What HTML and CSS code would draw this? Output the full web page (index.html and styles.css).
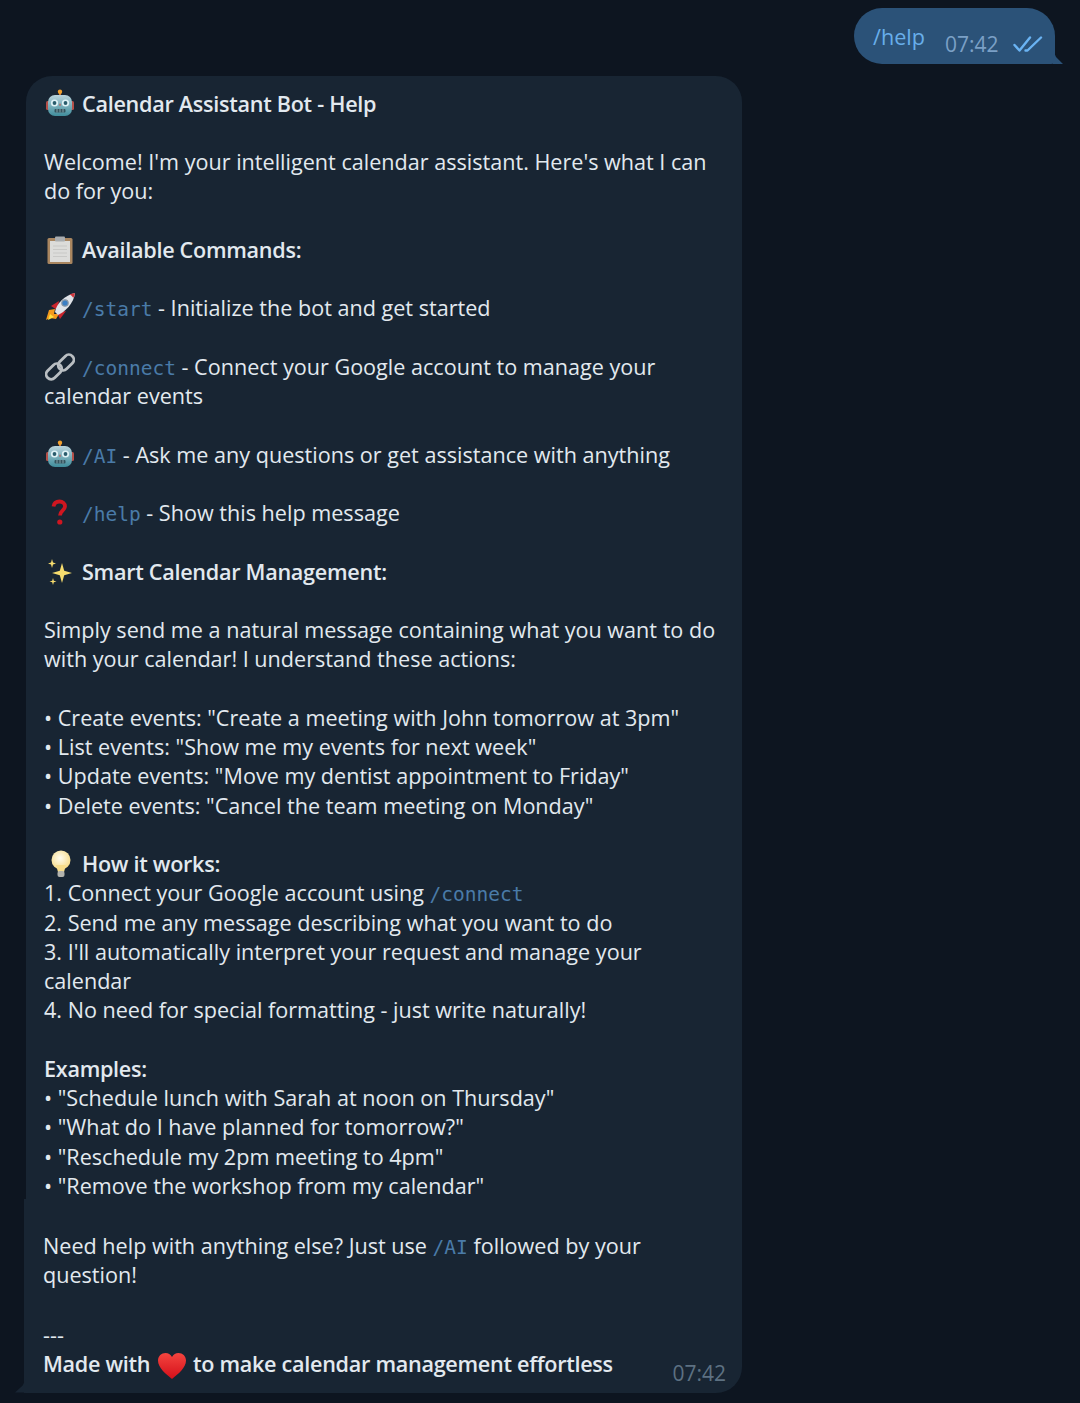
FILE: index.html
```html
<!DOCTYPE html>
<html lang="en">
<head>
  <meta charset="UTF-8">
  <meta name="viewport" content="width=device-width, initial-scale=1.0">
  <title>Calendar Assistant Bot</title>
  <link rel="stylesheet" href="styles.css">
</head>

<body>
  <!-- shared icons -->
  <svg class="defs" width="0" height="0">
    <defs>
      <linearGradient id="robotFace" x1="0" y1="0" x2="0" y2="1">
        <stop offset="0" stop-color="#b9d3dc"/>
        <stop offset="1" stop-color="#3f8d9c"/>
      </linearGradient>
      <radialGradient id="bulbGlow" cx="0.45" cy="0.4" r="0.6">
        <stop offset="0" stop-color="#fffdf0"/>
        <stop offset="1" stop-color="#f7dc8a"/>
      </radialGradient>
      <linearGradient id="heartFill" x1="0" y1="0" x2="0" y2="1">
        <stop offset="0" stop-color="#f4453f"/>
        <stop offset="1" stop-color="#d40f1a"/>
      </linearGradient>
      <symbol id="robot" viewBox="0 0 30 30">
        <rect x="14" y="1" width="2" height="5" fill="#c9763a"/>
        <circle cx="15" cy="2.800" r="2.200" fill="#f0a030"/>
        <rect x="1" y="12" width="4" height="9" rx="1.500" fill="#b5504a"/>
        <rect x="25" y="12" width="4" height="9" rx="1.500" fill="#b5504a"/>
        <rect x="3" y="6" width="24" height="21" rx="7" fill="url(#robotFace)"/>
        <circle cx="9.500" cy="14" r="3.600" fill="#dff2f6"/>
        <circle cx="20.500" cy="14" r="3.600" fill="#dff2f6"/>
        <circle cx="9.500" cy="14" r="1.900" fill="#2a5c6c"/>
        <circle cx="20.500" cy="14" r="1.900" fill="#2a5c6c"/>
        <path d="M14 16.500h2l-1-2.500z" fill="#c2574f"/>
        <rect x="9.500" y="20" width="11" height="3.400" rx="1" fill="#34545e"/>
        <path d="M12 20v3.400M15 20v3.400M18 20v3.400" stroke="#a9c5cc" stroke-width=".7"/>
      </symbol>
    </defs>
  </svg>

  <main class="chat">
    <div class="row-out">
      <div class="bubble-out">
        <span class="out-text">/help</span>
        <span class="out-time">07:42</span>
        <svg class="ticks" width="30" height="18" viewBox="0 0 30 18">
          <path d="M1.500 10l5 5.500L17 2.500M12.500 15.500l2 0L28 2.500" fill="none" stroke="#6ab3f3" stroke-width="2.400" stroke-linecap="round" stroke-linejoin="round"/>
        </svg>
      </div>
    </div>

    <div class="bubble-in">
      <div class="bubble-main">
        <p class="bold"><span class="emoji"><svg class="icon"><use href="#robot"/></svg></span>Calendar Assistant Bot - Help</p>

        <p>Welcome! I'm your intelligent calendar assistant. Here's what I can do for you:</p>

        <p class="bold"><span class="emoji">
          <svg class="icon" viewBox="0 0 30 30">
            <rect x="2.500" y="3" width="25" height="26" rx="1.500" fill="#a98660"/>
            <rect x="5" y="6" width="20" height="21" fill="#dcdcda"/>
            <path d="M8 11h14M8 14.500h14M8 18h14M8 21.500h14" stroke="#c8c8c6" stroke-width="1.200"/>
            <rect x="10" y="1.500" width="10" height="5" rx="1" fill="#a9adb0"/>
          </svg>
        </span>Available Commands:</p>

        <p><span class="emoji">
          <svg class="icon" viewBox="0 0 30 30">
            <path d="M1 27l3-10 6-1-1 5 5 0-3 5-6-1z" fill="#f59a1c"/>
            <path d="M3 27l2-6 4 3z" fill="#ffdf3c"/>
            <path d="M6 13l8-5-2 9z" fill="#c9252d"/>
            <path d="M15 26l6-8-9 2z" fill="#c9252d"/>
            <path d="M10 19C11 11 20 2 30 0c-1 10-10 19-17 22z" fill="#dfe3e8"/>
            <path d="M24.500 1.300c1.700.8 3.200 2.300 3.800 3.800C29.200 3.500 29.800 1.700 30 0z" fill="#d1343a"/>
            <circle cx="20" cy="10" r="3.200" fill="#3b7fc4" stroke="#8a98a6" stroke-width="1.200"/>
          </svg>
        </span><code class="cmd">/start</code> - Initialize the bot and get started</p>

        <p><span class="emoji">
          <svg class="icon" viewBox="0 0 30 30" fill="none" stroke="#b9bec2" stroke-width="2.800" stroke-linecap="round">
            <rect x="0" y="14.500" width="18" height="10" rx="5" transform="rotate(-45 9 19.500)"/>
            <rect x="12" y="5.500" width="18" height="10" rx="5" transform="rotate(-45 21 10.500)"/>
          </svg>
        </span><code class="cmd">/connect</code> - Connect your Google account to manage your calendar events</p>

        <p><span class="emoji"><svg class="icon"><use href="#robot"/></svg></span><code class="cmd">/AI</code> - Ask me any questions or get assistance with anything</p>

        <p><span class="emoji">
          <svg class="icon" viewBox="0 0 30 30">
            <path d="M8.500 8.500C9 5 11.500 3.500 14.500 3.500c3.200 0 5.500 2 5.500 4.800 0 4-5 4.200-5 9.200" fill="none" stroke="#cf1620" stroke-width="3.800"/>
            <circle cx="14.800" cy="24" r="2.600" fill="#cf1620"/>
          </svg>
        </span><code class="cmd">/help</code> - Show this help message</p>

        <p class="bold"><span class="emoji">
          <svg class="icon" viewBox="0 0 30 30" fill="#f6dc6e">
            <path d="M17 6l2.200 7.800L27 16l-7.800 2.200L17 26l-2.200-7.800L7 16l7.800-2.200z"/>
            <path d="M7 2l1 3.500L11 6.500 8 7.500 7 11 6 7.500 3 6.500 6 5.500z"/>
            <path d="M8 21l.8 2.700 2.700.8-2.700.8L8 28l-.8-2.700-2.700-.8 2.700-.8z"/>
          </svg>
        </span>Smart Calendar Management:</p>

        <p>Simply send me a natural message containing what you want to do with your calendar! I understand these actions:</p>

        <p>
          • Create events: "Create a meeting with John tomorrow at 3pm"<br>
          • List events: "Show me my events for next week"<br>
          • Update events: "Move my dentist appointment to Friday"<br>
          • Delete events: "Cancel the team meeting on Monday"
        </p>

        <p><span class="bold"><span class="emoji">
          <svg class="icon" viewBox="0 0 30 30">
            <circle cx="16" cy="11" r="9.500" fill="url(#bulbGlow)"/>
            <path d="M11 16h10l-2 7h-6z" fill="#f7dc8a"/>
            <rect x="12.500" y="22" width="7" height="6" rx="2" fill="#b3b3ad"/>
          </svg>
        </span>How it works:</span><br>
          1. Connect your Google account using <code class="cmd">/connect</code><br>
          2. Send me any message describing what you want to do<br>
          3. I'll automatically interpret your request and manage your calendar<br>
          4. No need for special formatting - just write naturally!
        </p>

        <p>
          <span class="bold">Examples:</span><br>
          • "Schedule lunch with Sarah at noon on Thursday"<br>
          • "What do I have planned for tomorrow?"<br>
          • "Reschedule my 2pm meeting to 4pm"<br>
          • "Remove the workshop from my calendar"
        </p>
      </div>

      <div class="bubble-end">
        <p>Need help with anything else? Just use <code class="cmd">/AI</code> followed by your question!</p>

        <p class="last">
          ---<br>
          <span class="bold">Made with <svg class="heart" viewBox="0 0 30 30"><path d="M15 28C9 23 1 17 1 9.500 1 5 4.500 2 8.500 2c2.800 0 5 1.500 6.500 4 1.500-2.500 3.700-4 6.500-4C25.500 2 29 5 29 9.500 29 17 21 23 15 28z" fill="url(#heartFill)"/></svg> to make calendar management effortless</span>
        </p>
        <span class="in-time">07:42</span>
        <span class="tail"></span>
      </div>
    </div>
  </main>
</body>
</html>
```

FILE: styles.css
```css
body {
  margin: 0;
  background: #0d1520;
  font-family: "Open Sans", "Noto Sans", sans-serif;
  font-size: 21.600px;
  line-height: 29.250px;
  color: #e2e9ef;
}
.defs {
  display: block;
  height: 0;
}
.chat {
  display: flex;
  flex-direction: column;
  gap: 12px;
  padding: 8px 25px 0 26px;
}
.row-out {
  display: flex;
  justify-content: flex-end;
}
.bubble-out {
  position: relative;
  display: flex;
  align-items: flex-start;
  width: 201px;
  height: 56px;
  box-sizing: border-box;
  padding: 14px 0 0 19px;
  background: #2b5278;
  border-radius: 28px 28px 4px 28px;
}
.bubble-out::after {
  content: "";
  position: absolute;
  right: -8px;
  bottom: 0;
  width: 10px;
  height: 14px;
  background: #2b5278;
  clip-path: polygon(0 0, 30% 50%, 100% 100%, 0 100%);
}
.out-text {
  color: #68aeea;
}
.out-time {
  margin: 8px 0 0 20px;
  font-size: 21px;
  color: #7ba0c6;
}
.ticks {
  margin: 13px 0 0 14px;
}
.bubble-in {
  width: 716px;
}
.bubble-main {
  box-sizing: border-box;
  padding: 12.500px 18px 0 18px;
  background: #182533;
  border-radius: 26px 26px 0 0;
}
.bubble-end {
  position: relative;
  margin-left: -2px;
  margin-top: -1px;
  padding: 32px 18px 14px 19px;
  background: #182533;
  border-radius: 0 0 26px 0;
}
p {
  margin: 0 0 29.250px;
}
.bubble-main p:last-child {
  margin-bottom: 0;
}
.bubble-end p {
  margin-bottom: 30.500px;
}
.bubble-end .last {
  margin-bottom: 0;
}
.bold {
  font-weight: 600;
  letter-spacing: -0.280px;
}
.emoji {
  display: inline-block;
  width: 38px;
  height: 20px;
  vertical-align: baseline;
}
.icon {
  display: block;
  width: 30px;
  height: 30px;
  margin-top: -3px;
  margin-left: 1px;
}
.cmd {
  font-family: "DejaVu Sans Mono", "Liberation Mono", monospace;
  font-size: 19.500px;
  line-height: 1;
  color: #4a7ba8;
}
.heart {
  width: 30px;
  height: 30px;
  margin: -10px 1px -10px 1px;
  vertical-align: 1px;
}
.in-time {
  position: absolute;
  right: 16px;
  bottom: 4px;
  font-size: 21px;
  color: #5d7182;
}
.tail {
  position: absolute;
  left: -9px;
  bottom: 0;
  width: 11px;
  height: 14px;
  background: #182533;
  clip-path: polygon(100% 0, 70% 50%, 0 100%, 100% 100%);
}
```
